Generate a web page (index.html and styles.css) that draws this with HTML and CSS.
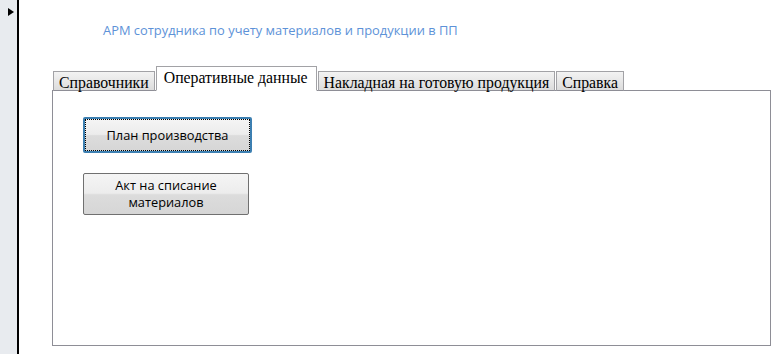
FILE: index.html
```html
<!DOCTYPE html>
<html lang="ru">
<head>
    <meta charset="UTF-8">
    <title>АРМ сотрудника</title>
    <link rel="stylesheet" href="styles.css">
</head>
<body>
    <div class="selector">
        <span class="marker"></span>
    </div>
    <div class="main">
        <div class="title">АРМ сотрудника по учету материалов и продукции в ПП</div>
        <div class="tabs">
            <div class="tab">Справочники</div>
            <div class="tab active">Оперативные данные</div>
            <div class="tab">Накладная на готовую продукция</div>
            <div class="tab">Справка</div>
        </div>
        <div class="panel">
            <button class="btn btn-plan focused">План производства</button>
            <button class="btn btn-act">Акт на списание<br>материалов</button>
        </div>
    </div>
</body>
</html>
```

FILE: styles.css
```css
body {
    margin: 0;
    padding: 0;
    display: flex;
    height: 354px;
    background-color: #fff;
    overflow: hidden;
}
.selector {
    width: 17px;
    background-color: #e8ebef;
    border-right: 2px solid #000;
    flex-shrink: 0;
}
.marker {
    display: block;
    width: 0;
    height: 0;
    margin: 8px 0 0 8px;
    border-top: 4px solid transparent;
    border-bottom: 4px solid transparent;
    border-left: 6px solid #000;
}
.main {
    padding-left: 33px;
    width: 719px;
}
.title {
    font-family: "Open Sans", sans-serif;
    font-size: 12.9px;
    color: #5d92d8;
    margin: 21px 0 0 51px;
    height: 45px;
}
.tabs {
    display: flex;
    align-items: flex-end;
    margin-left: 1px;
    margin-bottom: -1px;
    position: relative;
    z-index: 1;
}
.tab {
    font-family: "Liberation Serif", serif;
    font-size: 15.8px;
    color: #000;
    height: 20px;
    line-height: 21px;
    padding: 0 5px;
    border: 1px solid #a2a2a6;
    border-bottom: 1px solid #8e8e96;
    background: linear-gradient(#f3f3f3, #dcdcdc);
    box-sizing: border-box;
    margin-right: 1px;
}
.tab.active {
    height: 25px;
    line-height: 22px;
    padding: 0 8px 0 7px;
    background: #fff;
    border-bottom: 1px solid #fff;
}
.panel {
    border: 1px solid #8e8e96;
    height: 256px;
    box-sizing: border-box;
    display: flex;
    flex-direction: column;
    align-items: flex-start;
    padding: 26px 0 0 30px;
}
.btn {
    font-family: "Open Sans", sans-serif;
    font-size: 12.8px;
    color: #000;
    border: 1px solid #707070;
    border-radius: 2px;
    background: linear-gradient(#f5f5f5 0%, #ececec 48%, #dcdcdc 52%, #d6d6d6 100%);
    padding: 0;
    line-height: 17px;
}
.btn-plan {
    width: 169px;
    height: 36px;
}
.btn-act {
    width: 166px;
    height: 42px;
    margin-top: 20px;
}
.focused {
    border: 2px solid #3c7fb1;
    outline: 1px dotted #000;
    outline-offset: -3px;
}
```
